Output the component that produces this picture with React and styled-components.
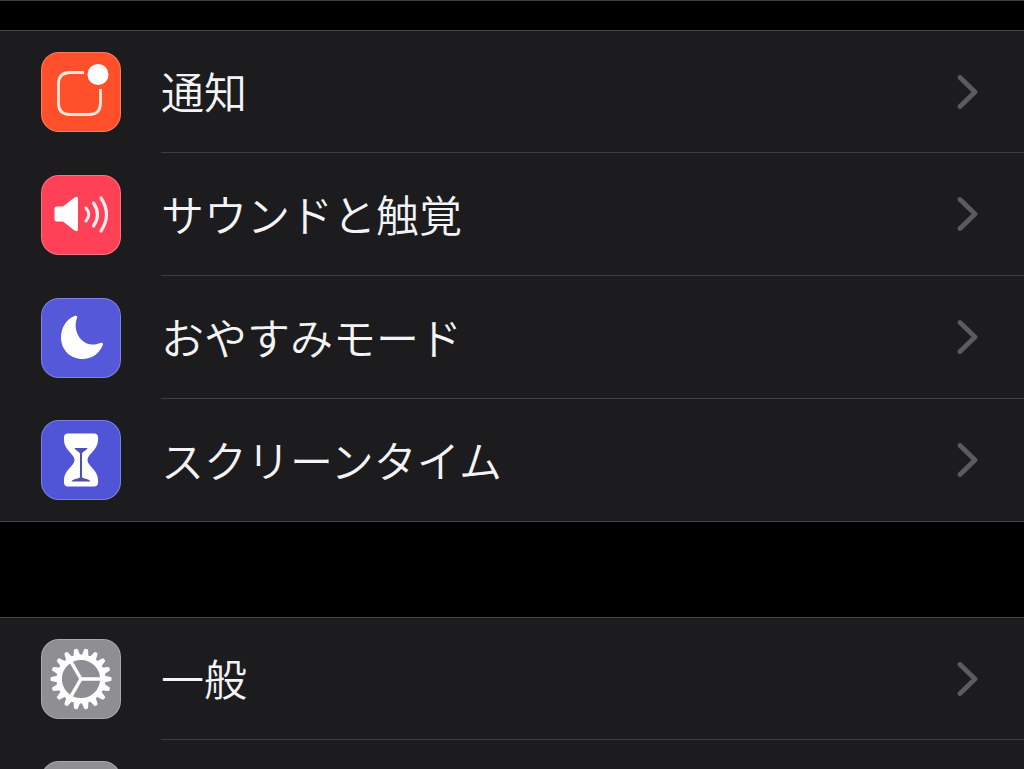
import React from 'react';
import styled, { createGlobalStyle } from 'styled-components'

const GlobalStyle = createGlobalStyle`
  body {
    margin: 0;
    background-color: #000;
  }
`

const Page = styled.main`
  box-sizing: border-box;
  height: 100vh;
  overflow: hidden;
  border-top: 1px solid #3c3c3e;
  padding-top: 29px;
  background-color: #000;
  font-family: "Liberation Sans", "Noto Sans CJK JP", sans-serif;
`

const Group = styled.ul`
  list-style: none;
  margin: 0 0 95px;
  padding: 0;
  border-top: 1px solid #464648;
  border-bottom: 1px solid #464648;
  background-color: #1c1c1e;
`

const Row = styled.a`
  display: flex;
  gap: 40px;
  padding-left: 41px;
  color: #f4f4f6;
  text-decoration: none;
`

const Tile = styled.span`
  box-sizing: border-box;
  flex: none;
  align-self: center;
  width: 80px;
  height: 80px;
  border: 1px solid rgba(255, 255, 255, 0.25);
  border-radius: 18px;
  overflow: hidden;
  background-color: ${props => props.$color};

  svg {
    display: block;
    margin: -1px;
  }
`

const Content = styled.span`
  display: flex;
  flex: 1;
  align-items: center;
  justify-content: space-between;
  height: 122px;
  padding-right: 45px;
  border-bottom: 1px solid #3f3f41;

  li:first-child & {
    height: 121px;
  }

  li:last-child & {
    border-bottom: none;
  }
`

const Label = styled.span`
  padding-bottom: 3px;
  font-family: "Noto Sans CJK JP", sans-serif;
  font-size: 43px;
  font-weight: 350;
  line-height: 64px;
`

const NotificationIcon = () => (
  <svg width="80" height="80" viewBox="0 0 80 80" fill="none" aria-hidden="true">
    <path
      d="M43 20.5H29Q17.500 20.500 17.500 32V51Q17.500 62.500 29 62.500H48Q59.500 62.500 59.500 51V37"
      stroke="#ffe9dc"
      strokeWidth="2.800"
    />
    <circle cx="57" cy="22.500" r="10.500" fill="#fff" />
  </svg>
)

const SoundIcon = () => (
  <svg width="80" height="80" viewBox="0 0 80 80" fill="none" aria-hidden="true">
    <path
      d="M15.500 31.500H22L33.500 22.500Q37 20.500 37 24V54Q37 57.500 33.500 55.500L22 46.500H15.500Q13.500 46.500 13.500 44.500V33.500Q13.500 31.500 15.500 31.500Z"
      fill="#fff"
    />
    <g stroke="#ffeef0" strokeLinecap="round">
      <path d="M45 33Q50.500 39.500 45 46" strokeWidth="3" />
      <path d="M52.500 28Q60.500 39.500 52.500 51" strokeWidth="3.200" />
      <path d="M60 23Q71 39.500 60 56" strokeWidth="3.200" />
    </g>
  </svg>
)

const MoonIcon = () => (
  <svg width="80" height="80" viewBox="0 0 80 80" aria-hidden="true">
    <path
      d="M33.500 18C35.500 17.200 37 18.200 36 20C31.500 32 39 46 51 46.500C54 46.700 57 46 59.500 45C61.500 44.300 62.500 45.500 61.800 47C58 56 50.500 61 41.500 61C29 61 20 51.500 20 39.500C20 30 25 21.500 33.500 18Z"
      fill="#fff"
    />
  </svg>
)

const HourglassIcon = () => (
  <svg width="80" height="80" viewBox="0 0 80 80" aria-hidden="true">
    <path
      d="M27 13.500H53Q57 13.500 57 17.500V20C57 30 46.500 34 46.500 40C46.500 46 57 50 57 60V62.500Q57 66.500 53 66.500H27Q23 66.500 23 62.500V60C23 50 33.500 46 33.500 40C33.500 34 23 30 23 20V17.500Q23 13.500 27 13.500Z"
      fill="#fff"
    />
    <path
      d="M33.500 28H46.500C46 30.500 41 31.500 41 34V57C41 58.800 48 58.500 49.500 61.500H30.500C32 58.500 39 58.800 39 57V34C39 31.500 34 30.500 33.500 28Z"
      fill="#4e50b0"
    />
  </svg>
)

const TEETH = Array.from({ length: 18 }, (_, i) => 10 + i * 20)

const GearIcon = () => (
  <svg width="80" height="80" viewBox="0 0 80 80" fill="none" aria-hidden="true">
    <g transform="translate(40 40)">
      {TEETH.map(angle => (
        <path
          key={angle}
          d="M-3.500 -23L-2 -29.500Q-1.800 -30.500 -1 -30.500H1Q1.800 -30.500 2 -29.500L3.500 -23Z"
          fill="#fff"
          transform={`rotate(${angle})`}
        />
      ))}
      <circle r="21.800" stroke="#fff" strokeWidth="5.400" />
      {[0, 120, 240].map(angle => (
        <path key={angle} d="M0 0H21" stroke="#fff" strokeWidth="3.400" transform={`rotate(${angle})`} />
      ))}
    </g>
  </svg>
)

const Chevron = () => (
  <svg width="22" height="36" viewBox="0 0 22 36" fill="none" aria-hidden="true">
    <path
      d="M3 3.500L18 18L3 32.500"
      stroke="#5b5b5f"
      strokeWidth="4.800"
      strokeLinecap="round"
      strokeLinejoin="round"
    />
  </svg>
)

const Item = ({ color, icon, label }) => (
  <li>
    <Row href="#">
      <Tile $color={color}>{icon}</Tile>
      <Content>
        <Label>{label}</Label>
        <Chevron />
      </Content>
    </Row>
  </li>
)

class App extends React.Component {
  render () {
    return (
      <Page>
        <GlobalStyle />
        <Group>
          <Item color="#ff4f2b" icon={<NotificationIcon />} label="通知" />
          <Item color="#ff4158" icon={<SoundIcon />} label="サウンドと触覚" />
          <Item color="#5558d9" icon={<MoonIcon />} label="おやすみモード" />
          <Item color="#5055d8" icon={<HourglassIcon />} label="スクリーンタイム" />
        </Group>
        <Group>
          <Item color="#8e8e93" icon={<GearIcon />} label="一般" />
          <Item color="#8e8e93" />
        </Group>
      </Page>
    )
  }
}

export default App
